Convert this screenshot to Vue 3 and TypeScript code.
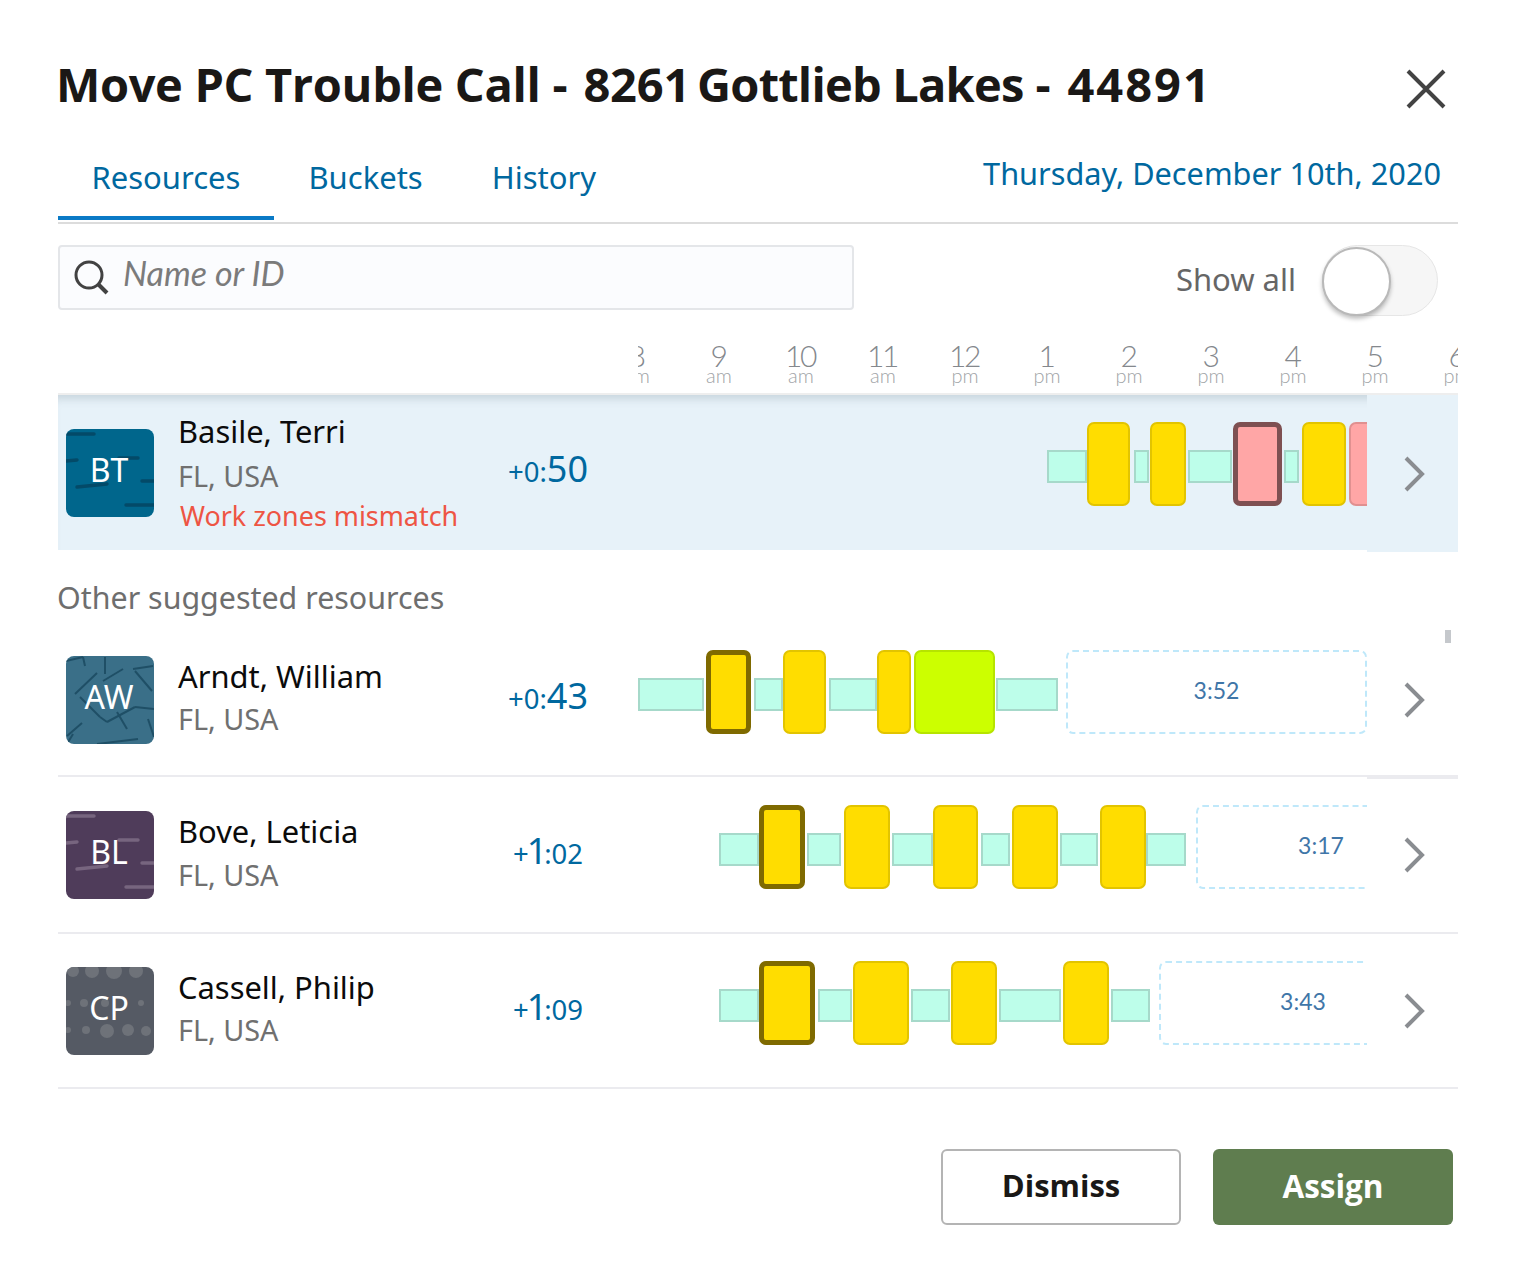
<script setup lang="ts">
type Kind = 'idle' | 'job' | 'cur' | 'alert' | 'alertcur' | 'lime' | 'free'
interface Seg { k: Kind; w: number; gap: number; label?: string }
interface Row {
  name: string; initials: string; delta: string; deltaBig?: string; deltaEnd?: string
  pattern: 'dash' | 'lines' | 'dots'; bg: string; err?: string; offset: number; segs: Seg[]
}
const s = (k: Kind, w: number, gap = 0, label?: string): Seg => ({ k, w, gap, label })

const tabs = ['Resources', 'Buckets', 'History']
const hours = [['8', 'am'], ['9', 'am'], ['10', 'am'], ['11', 'am'], ['12', 'pm'], ['1', 'pm'], ['2', 'pm'], ['3', 'pm'], ['4', 'pm'], ['5', 'pm'], ['6', 'pm']]

const selected: Row = {
  name: 'Basile, Terri', initials: 'BT', delta: '+0:', deltaBig: '50', pattern: 'dash', bg: '#00668c',
  err: 'Work zones mismatch', offset: 409,
  segs: [s('idle', 40), s('job', 43, 0), s('idle', 15, 4), s('job', 36, 1), s('idle', 44, 2), s('alertcur', 49, 1), s('idle', 15, 2), s('job', 44, 3), s('alert', 40, 3)]
}
const others: Row[] = [
  {
    name: 'Arndt, William', initials: 'AW', delta: '+0:', deltaBig: '43', pattern: 'lines', bg: '#3a6f88', offset: 0,
    segs: [s('idle', 66), s('cur', 45, 2), s('idle', 29, 3), s('job', 43, 0), s('idle', 48, 3), s('job', 34, 0), s('lime', 81, 3), s('idle', 62, 1), s('free', 301, 8, '3:52')]
  },
  {
    name: 'Bove, Leticia', initials: 'BL', delta: '+', deltaBig: '1', deltaEnd: ':02', pattern: 'dash', bg: '#4f3c5a', offset: 81,
    segs: [s('idle', 40), s('cur', 46), s('idle', 34, 2), s('job', 46, 3), s('idle', 41, 2), s('job', 45), s('idle', 29, 3), s('job', 46, 2), s('idle', 38, 2), s('job', 46, 2), s('idle', 40), s('free', 250, 10, '3:17')]
  },
  {
    name: 'Cassell, Philip', initials: 'CP', delta: '+', deltaBig: '1', deltaEnd: ':09', pattern: 'dots', bg: '#555a64', offset: 81,
    segs: [s('idle', 40), s('cur', 56), s('idle', 34, 3), s('job', 56, 1), s('idle', 39, 2), s('job', 46, 1), s('idle', 62, 2), s('job', 46, 2), s('idle', 39, 2), s('free', 288, 9, '3:43')]
  }
]

const dashLines = [[1, 5, 28, 5], [0, 32, 11, 31], [53, 29, 72, 29], [11, 58, 41, 55], [76, 52, 88, 52], [60, 76, 88, 76]]
const awLines = [[0, 5, 17, 1], [17, 1, 19, 10], [39, 1, 39, 18], [9, 38, 31, 17], [37, 25, 57, 13], [67, 13, 87, 10], [69, 15, 86, 35], [14, 41, 34, 61], [34, 61, 41, 66], [41, 66, 69, 51], [69, 51, 88, 53], [51, 56, 61, 73], [82, 63, 88, 81], [1, 80, 16, 67], [1, 88, 7, 78], [31, 88, 72, 83]]
const dots = [[7, 4, 6], [26, 4, 7], [48, 4, 8], [70, 4, 7], [2, 36, 3], [18, 36, 4], [39, 36, 4], [75, 36, 3], [2, 63, 3], [20, 63, 4], [41, 64, 7], [62, 63, 6], [80, 64, 5]]
</script>

<template>
  <div class="dialog">
    <header class="title-row">
      <h1 class="title"><span class="t-a">Move PC Trouble Call</span> - <span class="t-d">8261</span> <span class="t-b">Gottlieb Lakes</span> - <span class="t-c">44891</span></h1>
      <svg class="close" width="40" height="40" viewBox="0 0 40 40" aria-label="Close">
        <path d="M2 2 L38 38 M38 2 L2 38" stroke="#434343" stroke-width="4" fill="none" />
      </svg>
    </header>

    <nav class="tabs">
      <a v-for="(t, i) in tabs" :key="t" class="tab" :class="{ active: i === 0 }">{{ t }}</a>
      <span class="date">Thursday, December 10th, 2020</span>
    </nav>

    <div class="filters">
      <label class="search">
        <svg width="36" height="36" viewBox="0 0 36 36" class="search-icon">
          <circle cx="15" cy="15" r="13" fill="none" stroke="#424242" stroke-width="3" />
          <path d="M24 24 L33 33" stroke="#424242" stroke-width="4" />
        </svg>
        <input class="search-input" placeholder="Name or ID" />
      </label>
      <div class="show-all">
        <span class="show-text">Show all</span>
        <span class="switch"><span class="knob"></span></span>
      </div>
    </div>

    <div class="ticks-head">
      <div class="ticks-clip">
        <div class="ticks">
          <div v-for="h in hours" :key="h[0]" class="tick">
            <span class="tick-h">{{ h[0] }}</span>
            <span class="tick-m">{{ h[1] }}</span>
          </div>
        </div>
      </div>
    </div>

    <section class="row row-selected">
      <div class="who">
        <div class="avatar" :style="{ background: selected.bg }">
          <svg class="pattern" viewBox="0 0 88 88">
            <line v-for="(l, i) in dashLines" :key="i" :x1="l[0]" :y1="l[1]" :x2="l[2]" :y2="l[3]" stroke="#034a68" stroke-width="3.4" stroke-linecap="round" />
          </svg>
          <span class="initials">{{ selected.initials }}</span>
        </div>
        <div class="info">
          <div class="name">{{ selected.name }}</div>
          <div class="loc">FL, USA</div>
          <div class="err">{{ selected.err }}</div>
        </div>
        <div class="delta">{{ selected.delta }}<b>{{ selected.deltaBig }}</b></div>
      </div>
      <div class="track" :style="{ paddingLeft: selected.offset + 'px' }">
        <div v-for="(g, i) in selected.segs" :key="i" class="seg" :class="g.k" :style="{ width: g.w + 'px', marginLeft: g.gap + 'px' }"></div>
      </div>
      <div class="chev-cell">
        <svg width="24" height="38" viewBox="0 0 24 38"><path d="M2 3 L18 19 L2 35" fill="none" stroke="#8a8d91" stroke-width="4" /></svg>
      </div>
    </section>

    <h2 class="section-label">Other suggested resources</h2>
    <div class="scroll-mark"></div>

    <section v-for="(r, idx) in others" :key="r.name" class="row row-plain">
      <div class="who">
        <div class="avatar" :style="{ background: r.bg }">
          <svg class="pattern" viewBox="0 0 88 88">
            <template v-if="r.pattern === 'dash'">
              <line v-for="(l, i) in dashLines" :key="i" :x1="l[0]" :y1="l[1]" :x2="l[2]" :y2="l[3]" stroke="#77657f" stroke-width="3.4" stroke-linecap="round" />
            </template>
            <template v-else-if="r.pattern === 'lines'">
              <line v-for="(l, i) in awLines" :key="i" :x1="l[0]" :y1="l[1]" :x2="l[2]" :y2="l[3]" stroke="#1f4f66" stroke-width="2" />
            </template>
            <template v-else>
              <circle v-for="(c, i) in dots" :key="i" :cx="c[0]" :cy="c[1]" :r="c[2]" fill="#6e7279" />
            </template>
          </svg>
          <span class="initials">{{ r.initials }}</span>
        </div>
        <div class="info">
          <div class="name">{{ r.name }}</div>
          <div class="loc">FL, USA</div>
        </div>
        <div class="delta">{{ r.delta }}<b :class="{ one: r.deltaBig === '1' }">{{ r.deltaBig }}</b>{{ r.deltaEnd }}</div>
      </div>
      <div class="track" :style="{ paddingLeft: r.offset + 'px' }">
        <div v-for="(g, i) in r.segs" :key="i" class="seg" :class="g.k" :style="{ width: g.w + 'px', marginLeft: g.gap + 'px' }">{{ g.label }}</div>
      </div>
      <div class="chev-cell" :class="{ nudge: idx === 0 }">
        <svg width="24" height="38" viewBox="0 0 24 38"><path d="M2 3 L18 19 L2 35" fill="none" stroke="#8a8d91" stroke-width="4" /></svg>
      </div>
    </section>

    <footer class="actions">
      <button class="btn btn-ghost">Dismiss</button>
      <button class="btn btn-primary">Assign</button>
    </footer>
  </div>
</template>

<style>
html, body { background: #fff; }
</style>

<style scoped>
.dialog {
  position: relative;
  width: 1400px;
  margin-left: 58px;
  font-family: "Noto Sans", "Open Sans", sans-serif;
}
.title-row { display: flex; justify-content: space-between; height: 140px; padding-top: 54px; box-sizing: border-box; }
.title { margin: 0 0 0 -2px; font-family: "Open Sans", sans-serif; font-size: 47px; line-height: 60px; font-weight: 700; color: #1a1816; white-space: nowrap; letter-spacing: -0.2px; }
.t-a { letter-spacing: -0.35px; }
.t-d { margin-left: 4px; }
.t-b { letter-spacing: -0.8px; margin-left: -5px; }
.t-c { letter-spacing: 2px; margin-left: 5px; }
.close { margin: 15px 12px 0 0; }
.tabs { display: flex; align-items: flex-start; height: 84px; box-sizing: border-box; border-bottom: 2px solid #dcdcdc; position: relative; }
.tab { box-sizing: border-box; height: 80px; padding: 0 34.5px; font-size: 31px; line-height: 74px; color: #00689f; border-bottom: 4px solid transparent; }
.tab.active { padding: 0 33.5px; border-bottom-color: #0a7ac6; }
.date { margin-left: auto; margin-right: 17px; font-size: 30.7px; line-height: 66px; color: #00689f; }
.filters { display: flex; justify-content: space-between; margin-top: 21px; height: 95px; }
.search { display: flex; align-items: center; box-sizing: border-box; width: 796px; height: 65px; padding-left: 14px; background: #fbfcfe; border: 2px solid #e4e6e9; border-radius: 4px; }
.search-icon { flex: none; }
.search-input { flex: 1; margin: 0 0 10px 13px; border: 0; outline: 0; background: transparent; font-family: "Lato", sans-serif; font-style: italic; font-size: 34px; color: #7b7b7b; padding: 0; }
.search-input::placeholder { color: #7b7b7b; opacity: 1; }
.show-all { display: flex; align-items: center; height: 71px; margin-right: 20px; font-size: 31px; color: #666; gap: 26px; }
.show-text { margin-top: -3px; }
.switch { position: relative; display: block; width: 116px; height: 71px; box-sizing: border-box; border-radius: 36px; background: #f6f6f6; border: 1px solid #e6e6e6; }
.knob { position: absolute; left: -1px; top: 1px; width: 69px; height: 69px; box-sizing: border-box; border-radius: 50%; background: #fff; border: 2px solid #b9b9b9; box-shadow: 0 3px 4px rgba(0, 0, 0, .25); }
.ticks-head { height: 55px; box-sizing: border-box; padding-left: 580px; border-bottom: 2px solid #eee; }
.ticks-clip { overflow: hidden; height: 53px; }
.ticks { display: flex; margin-left: -42px; padding-top: 2px; }
.tick { flex: none; width: 82px; display: flex; flex-direction: column; align-items: center; color: #8d9196; font-family: "Lato", sans-serif; }
.tick-h { font-size: 30px; font-weight: 300; line-height: 26px; letter-spacing: -2.5px; margin-right: 2px; color: #84888d; }
.tick-m { font-size: 20px; line-height: 15px; font-weight: 300; color: #a0a3a6; }
.row { display: grid; grid-template-columns: 580px 729px 91px; }
.row-selected { height: 155px; background: #e7f2f9; box-shadow: inset 0 10px 8px -6px rgba(90, 110, 125, .22); }
.row-plain { height: 153px; border-bottom: 2px solid #ebebef; box-sizing: content-box; }
.row-plain:nth-of-type(3) { height: 155px; }
.row-plain:nth-of-type(3) .loc { margin-top: 2px; }
.row-plain:nth-of-type(4) > * { margin-top: -1px; }
.who { position: relative; display: flex; }
.avatar { position: relative; flex: none; width: 88px; height: 88px; margin: 34px 0 0 8px; border-radius: 8px; overflow: hidden; color: #fff; display: flex; align-items: center; justify-content: center; }
.pattern { position: absolute; inset: 0; width: 88px; height: 88px; filter: blur(.6px); }
.initials { position: relative; font-size: 32px; line-height: 1; margin: 0 2px 7px 0; }
.info { margin-left: 24px; width: 320px; padding-top: 15px; }
.row-plain .info { padding-top: 33px; }
.name { font-size: 30.9px; line-height: 42px; color: #0b0b0b; white-space: nowrap; }
.loc { font-size: 28.8px; line-height: 42px; color: #707070; margin-top: 3px; }
.row-plain .loc { margin-top: 1px; }
.err { font-size: 26.9px; line-height: 38px; color: #ee5544; margin-left: 2px; white-space: nowrap; }
.delta { width: 100px; padding-top: 50px; text-align: center; font-size: 27.5px; line-height: 48px; color: #00689f; white-space: nowrap; }
.delta b { font-weight: 400; font-size: 36px; }
.delta b.one { letter-spacing: -3px; margin-left: -2px; }
.track { display: flex; align-items: flex-start; overflow: hidden; padding-top: 28px; box-sizing: border-box; }
.row-selected .track { padding-top: 27px; }
.seg { flex: none; box-sizing: border-box; }
.idle { height: 33px; margin-top: 28px; background: #bdfeea; border: 2px solid #a6d9ca; }
.job, .cur, .alert, .alertcur, .lime { height: 84px; border-radius: 7px; background: #ffdd00; border: 2px solid #e2c400; }
.cur { border: 5px solid #7f6a00; }
.alert { background: #ffa6a6; border-color: #e09090; }
.alertcur { background: #ffa6a6; border: 5px solid #7e5052; }
.lime { background: #ccff00; border-color: #b6e400; }
.free { height: 84px; border: 2px dashed #bfe8fa; border-radius: 7px; color: #3f76a8; display: flex; align-items: center; justify-content: center; padding: 0 0 4px 0; font-family: "Lato", sans-serif; font-size: 23px; }
.chev-cell { display: flex; align-items: flex-start; padding: 59px 0 0 37px; box-sizing: border-box; }
.row-selected .chev-cell { background: #e7f2f9; margin-bottom: -2px; padding-top: 60px; }
.chev-cell.nudge { border-bottom: 2px solid #ebebef; margin-bottom: -4px; }
.section-label { margin: 0 0 0 -1px; height: 72px; font-size: 30.4px; line-height: 95px; font-weight: 400; color: #6e6e6e; }
.scroll-mark { position: absolute; left: 1387px; top: 630px; width: 6px; height: 13px; background: #c5c8cc; }
.actions { display: flex; justify-content: flex-end; gap: 32px; margin: 60px 5px 0 0; }
.btn { width: 240px; height: 76px; border-radius: 6px; box-sizing: border-box; font-family: "Open Sans", sans-serif; font-weight: 700; font-size: 31.5px; padding-bottom: 5px; }
.btn-ghost { background: #fff; border: 2px solid #b4b4b4; color: #1a1816; font-size: 31px; }
.btn-primary { background: #5f7d4f; border: 0; color: #fff; }
</style>
